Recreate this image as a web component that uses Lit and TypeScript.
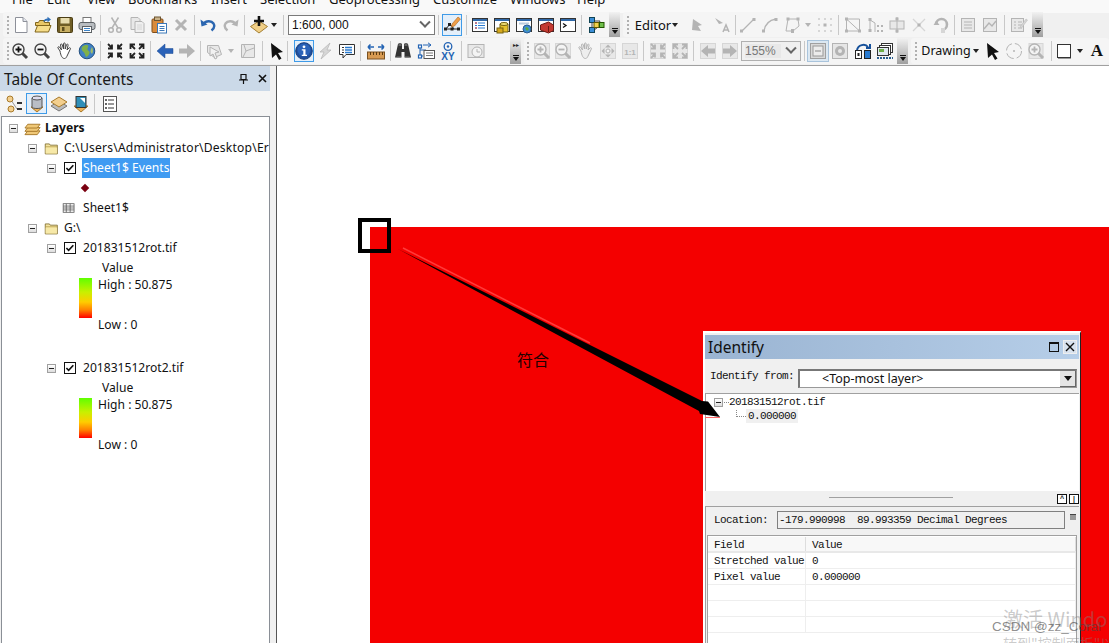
import { LitElement, html, css, svg } from "lit";
import { customElement } from "lit/decorators.js";

const I = (b: unknown, s = 18) => html`<svg width=${s} height=${s} viewBox="0 0 18 18">${b}</svg>`;
const G1 = "#b4b4b4", G2 = "#d6d6d6", G3 = "#e8e8e8";
const win = (inner: unknown, stroke = "#333", bar = "#2f68a8", fill = "#fff") => svg`<rect x="1.500" y="2.500" width="15" height="13" fill=${fill} stroke=${stroke}/><rect x="2" y="3" width="14" height="2" fill=${bar}/>${inner}`;
const mag = (c: string, d: string, o = "#444") => svg`<path d="M11 11l5 5" stroke=${o} stroke-width="3"/><circle cx="7.500" cy="7.500" r="5.500" fill="#f4f4f4" stroke=${o} stroke-width="1.400"/><path d=${d} stroke=${c} stroke-width="1.800"/>`;
const arrows4 = (inward: boolean, c = "#222") => {
  const a = inward
    ? "M2 2l4 4M6 2.500v4H2M16 2l-4 4M12 2.500v4h4M2 16l4-4M6 15.500v-4H2M16 16l-4-4M12 15.500v-4h4"
    : "M7 7L3 3M2.500 7V2.500H7M11 7l4-4M15.500 7V2.500H11M7 11l-4 4M2.500 11v4.500H7M11 11l4 4M15.500 11v4.500H11";
  return svg`<path d=${a} fill="none" stroke=${c} stroke-width="1.800"/>`;
};
const gdoc = (inner: unknown) => svg`<rect x="2.500" y="2.500" width="13" height="13" fill=${G3} stroke=${G1}/>${inner}`;
const scissors = (c: string) => svg`<g fill="none" stroke=${c} stroke-width="1.500"><circle cx="5" cy="14" r="2.300"/><circle cx="13" cy="14" r="2.300"/><path d="M6 12L12.500 1.500M12 12L5.500 1.500"/></g>`;

const ICON: Record<string, any> = {
  newDoc: I(svg`<path d="M3.500 1.500h7.500l4 4v11H3.500z" fill="#fff" stroke="#8d9099"/><path d="M11 1.500v4h4" fill="#e4e8ef" stroke="#8d9099"/>`),
  open: I(svg`<path d="M1.500 6.500h3l1-2h5v2h5v3h-14z" fill="#e9c766" stroke="#80651c"/><path d="M3.500 9.500h13.500l-2.500 6.500H1z" fill="#f6dd8a" stroke="#80651c"/><path d="M9 6C10 3.500 11.500 2.500 13.500 2.500V.8l3.500 2.700-3.500 2.700V4.500C12 4.500 10.500 5 9 6z" fill="#2f6fb7"/>`),
  save: I(svg`<rect x="1.500" y="1.500" width="15" height="15" rx="1" fill="#6f5d25" stroke="#4a3d14"/><rect x="4.500" y="2" width="9" height="5.500" fill="#e7dcae"/><rect x="4" y="10" width="10" height="6" fill="#c7ae62"/><rect x="6" y="11" width="2.500" height="4" fill="#5c4c1c"/>`),
  print: I(svg`<rect x="5" y="1.500" width="8" height="6" fill="#fff" stroke="#777"/><rect x="1" y="6.500" width="16" height="7" rx="2" fill="#b9bdc1" stroke="#5d6266"/><rect x="4.500" y="10.500" width="9" height="6" fill="#fff" stroke="#5d6266"/><path d="M6 12.500h6M6 14.500h6" stroke="#3b83c8"/>`),
  cut: I(scissors(G1)),
  copy: I(svg`<path d="M3 1.500h7l2 2v10H3z" fill=${G3} stroke=${G1}/><path d="M7 5.500h7l2 2v9H7z" fill="#efefef" stroke=${G1}/><path d="M9 9h5M9 11h5M9 13h5" stroke=${G2}/>`),
  paste: I(svg`<rect x="2" y="3" width="11" height="13.500" rx="1" fill="#d98b3c" stroke="#7f4e1c"/><rect x="4.500" y="1" width="6" height="3.500" fill="#c9b28a" stroke="#6d5530"/><rect x="7.500" y="7.500" width="9" height="9.500" fill="#fff" stroke="#3b78b8"/><path d="M9.500 10.500h5M9.500 12.500h5M9.500 14.500h5" stroke="#3b78b8"/>`),
  del: I(svg`<path d="M4 4l10 10M14 4L4 14" stroke=${G1} stroke-width="3"/>`),
  undo: I(svg`<path d="M4.500 8C7 4.500 12.500 4.500 14.500 7.500c1.500 2.500.5 5-2 7" fill="none" stroke="#2b66b0" stroke-width="2.400"/><path d="M1.500 3.500l1 7 6-2z" fill="#2b66b0"/>`),
  redo: I(svg`<g transform="matrix(-1 0 0 1 18 0)"><path d="M4.500 8C7 4.500 12.500 4.500 14.500 7.500c1.500 2.500.5 5-2 7" fill="none" stroke=${G1} stroke-width="2.400"/><path d="M1.500 3.500l1 7 6-2z" fill=${G1}/></g>`),
  add: I(svg`<path d="M9 5l8.500 5.500L9 17 .5 10.500z" fill="#f1cf86" stroke="#a37f34"/><path d="M9 0v10M4 5h10" stroke="#111" stroke-width="2.600"/>`),
  edit: I(svg`<path d="M3 13h12M3 13l4-5M7 8l4 5" stroke="#222" fill="none"/><g fill="#222"><rect x="1" y="11.500" width="3" height="3"/><rect x="7.500" y="11.500" width="3" height="3"/><rect x="14" y="11.500" width="3" height="3"/><rect x="5" y="7" width="3" height="3"/></g><path d="M9 8l6-7 2.500 2-6 7-3 1z" fill="#ee9f4a" stroke="#b0651d" stroke-width=".6"/>`),
  tableWin: I(win(svg`<path d="M4 7h2M7 7h7M4 9.500h2M7 9.500h7M4 12h2M7 12h7" stroke="#2a7bd0"/><path d="M4 7h2M4 12h2" stroke="#d33"/>`)),
  catalog: I(win(svg`<path d="M7 8h8v8H7z" fill="#e6c12b" stroke="#76620e"/><ellipse cx="11" cy="8" rx="4" ry="1.500" fill="#f4e27a" stroke="#76620e"/><rect x="4" y="12" width="6" height="5" fill="#d6a81e" stroke="#76620e"/>`)),
  search: I(win(svg`<rect x="4" y="6.500" width="10" height="2" fill="#bcd"/><circle cx="12" cy="13" r="4" fill="#3d8dd0" stroke="#2a5e90"/><path d="M10 12l2-1 2 2-2 2z" fill="#5eaa3c"/>`)),
  toolbox: I(win(svg`<path d="M3.500 9l8-3 5 3v5.500l-5 2.500-8-3z" fill="#c43a32" stroke="#6d1a14"/><path d="M11.500 10v6" stroke="#6d1a14"/>`)),
  python: I(win(svg`<path d="M4 7.500l3 2-3 2" fill="none" stroke="#111" stroke-width="1.300"/>`)),
  model: I(svg`<path d="M5 4v10M5 5h8M5 13h4l4-8" fill="none" stroke="#444"/><rect x="2.500" y="1.500" width="5" height="5" fill="#3b8ed8" stroke="#145"/><rect x="2.500" y="11.500" width="5" height="5" fill="#3b8ed8" stroke="#145"/><rect x="7" y="6.500" width="5" height="5" fill="#f0d24a" stroke="#650"/><rect x="12.500" y="6.500" width="4.500" height="5" fill="#6fbf4a" stroke="#250"/>`),
  tri: I(svg`<path d="M5 3l9 6-4 1 3 5-9-1z" fill=${G1}/>`),
  triA: I(svg`<path d="M2 2l8 5-4 1z" fill=${G1}/><path d="M10 16l3-7 3 7M11 14h4" fill="none" stroke=${G1} stroke-width="1.500"/>`),
  line: I(svg`<path d="M3 15L15 3" stroke=${G1} stroke-width="1.300"/><rect x="1" y="13.500" width="3" height="3" fill=${G1}/><rect x="13.500" y="2" width="3" height="3" fill=${G1}/>`),
  curve: I(svg`<path d="M3 15C4 8 9 4 15 3" stroke=${G1} fill="none" stroke-width="1.300"/><rect x="1" y="13.500" width="3" height="3" fill=${G1}/><rect x="13.500" y="2" width="3" height="3" fill=${G1}/>`),
  poly: I(svg`<path d="M5 3h10l1 7-6 5H3z" fill="none" stroke=${G1}/><g fill=${G1}><rect x="3.500" y="1.500" width="3" height="3"/><rect x="13.500" y="1.500" width="3" height="3"/><rect x="8" y="13" width="3" height="4"/></g>`),
  star: I(svg`<g fill=${G2}><rect x="7.500" y="7.500" width="3" height="3" fill=${G1}/><rect x="2" y="2" width="2" height="2"/><rect x="14" y="2" width="2" height="2"/><rect x="2" y="14" width="2" height="2"/><rect x="14" y="14" width="2" height="2"/><rect x="8" y="2" width="2" height="2"/><rect x="8" y="14" width="2" height="2"/><rect x="2" y="8" width="2" height="2"/><rect x="14" y="8" width="2" height="2"/></g>`),
  topo1: I(svg`<path d="M2.500 3h13v12h-13zM2.500 3l13 12" fill="none" stroke=${G1}/><g fill=${G1}><rect x="1" y="1.500" width="3" height="3"/><rect x="14" y="13.500" width="3" height="3"/><rect x="1" y="13.500" width="3" height="3"/></g>`),
  topo2: I(svg`<path d="M4 2v14M4 4l5 3v9" fill="none" stroke=${G1}/><g fill=${G1}><rect x="2.500" y="2" width="3" height="3"/><rect x="2.500" y="13" width="3" height="3"/><rect x="11" y="9" width="2" height="2"/><rect x="15" y="9" width="2" height="2"/><rect x="11" y="14" width="2" height="2"/><rect x="15" y="14" width="2" height="2"/></g>`),
  split: I(svg`<rect x="2" y="5" width="14" height="8" fill=${G3} stroke=${G1}/><path d="M9 1v16" stroke=${G1}/><rect x="7.500" y="1.500" width="3" height="3" fill=${G1}/><rect x="7.500" y="13.500" width="3" height="3" fill=${G1}/>`),
  cross: I(svg`<path d="M3 15L15 3M3 3l12 12" stroke=${G2} stroke-width="1.300"/><rect x="7.500" y="7.500" width="3" height="3" fill=${G1}/>`),
  rot: I(svg`<path d="M4 8a5.500 5.500 0 1 1 6 6" fill="none" stroke=${G1} stroke-width="2.600"/><path d="M1.500 9h6L4.500 5z" fill=${G1}/><rect x="9" y="12" width="4" height="5" fill=${G2}/>`),
  attr: I(gdoc(svg`<path d="M5 6h8M5 9h8M5 12h8" stroke=${G1}/>`)),
  sketch: I(gdoc(svg`<path d="M3 13l5-6 3 3 4-5" fill="none" stroke=${G1} stroke-width="1.400"/>`)),
  props: I(svg`<rect x="1.500" y="2.500" width="12" height="13" fill=${G3} stroke=${G1}/><path d="M4 6h2M8 6h4M4 9h2M8 9h4M4 12h2M8 12h4" stroke=${G1}/><path d="M10 11l6-8 1.500 1-6 8z" fill=${G2} stroke=${G1} stroke-width=".5"/>`),
  zoomIn: I(mag("#111", "M4.500 7.500h6M7.500 4.500v6")),
  zoomOut: I(mag("#111", "M4.500 7.500h6")),
  pan: I(svg`<path d="M4 9L2 6c-.6-1 .8-1.800 1.500-1L5.500 8 4.500 3c-.2-1.200 1.500-1.400 1.700-.3L7.500 7 7.500 1.800c0-1.200 1.700-1.200 1.700 0V7L10.500 2.800c.3-1.100 1.900-.7 1.600.4L11 8 13 6c.8-.8 2 .2 1.300 1.100L11.500 13c-.8 1.800-1.500 3.500-3 3.500-2.500 0-3.700-3-4.500-7.500z" fill="#fff" stroke="#444"/>`),
  globe: I(svg`<circle cx="9" cy="9" r="7.800" fill="#3f80c4" stroke="#24507f"/><path d="M4 5c2-2 5-2.500 6-1.500 1 1.500-1 2.500-.5 4S12 9 11.500 11 9.500 14.500 8 15c-1-2-1-4-2.500-5C4 9 3 7 4 5z" fill="#7fb04a"/><path d="M14 5c1 2 1.500 5 0 7l-1.500-2c0-2 .5-3.500 1.500-5z" fill="#a2bd6a"/>`),
  fixedIn: I(arrows4(true)),
  fixedOut: I(arrows4(false)),
  back: I(svg`<path d="M1 9l8-7v4.500h8v5H9V16z" fill="#2a62b8" stroke="#1d4a90" stroke-width=".5"/>`),
  fwd: I(svg`<path d="M17 9L9 2v4.500H1v5h8V16z" fill=${G1}/>`),
  sel: I(svg`<path d="M1.500 3.500h11l3 9-7 3-7-5z" fill=${G3} stroke=${G1}/><path d="M4 5l9 5-4 1 2 5-2 1-2-5-3 2z" fill="#f2f2f2" stroke=${G1}/>`),
  clear: I(svg`<path d="M2.500 2.500h13v13h-13z" fill=${G3} stroke=${G1}/><path d="M5 3l2 6-3 6M7 9l8-3" stroke=${G1} fill="none"/>`),
  ptr: I(svg`<path d="M3 1l12 9-5 1 3.500 5.500-2.500 1.500L8 12.500l-4 3.500z" fill="#111"/>`),
  info: I(svg`<circle cx="9" cy="9" r="8.300" fill="#1f4f9e" stroke="#123a7a"/><circle cx="9" cy="8" r="6.500" fill="#2a62b8"/><circle cx="9" cy="4.800" r="1.400" fill="#fff"/><path d="M6.800 7.200H10.500V12.800H12V14H6.800V12.800H8.300V8.400H6.800z" fill="#fff"/>`),
  bolt: I(svg`<path d="M13 1L3 10h4l-3 7 10-9h-4z" fill=${G2} stroke=${G1} stroke-width=".7"/>`),
  popup: I(svg`<path d="M1.500 2.500h15v10H8l-3 3.500V12.500H1.500z" fill="#fff" stroke="#333"/><path d="M4 5.500h2M4 8h2M4 10.500h2" stroke="#333"/><path d="M7 5.500h7M7 8h7M7 10.500h7" stroke="#2a7bd0" stroke-width="1.300"/>`),
  measure: I(svg`<path d="M1 5h6M1 5l2.500-2.500M1 5l2.500 2.500M17 5h-6M17 5l-2.500-2.500M17 5l-2.500 2.500" stroke="#2464b4" fill="none" stroke-width="1.600"/><rect x=".5" y="10" width="17" height="7" fill="#d79a52" stroke="#7a5120"/><path d="M3.500 10v3M6.500 10v3M9.500 10v3M12.500 10v3M15.500 10v3" stroke="#5a3a10"/>`),
  bino: I(svg`<path d="M4 2h4v5h2V2h4l3 13.500h-6.500V10h-3v5.500H1z" fill="#333"/><path d="M2.500 15h4.500M11 15h4.500" stroke="#777"/><rect x="4.500" y="1" width="3" height="3" fill="#666"/><rect x="10.500" y="1" width="3" height="3" fill="#666"/>`),
  route: I(svg`<path d="M3 5v10M3 8h6M3 14h3" stroke="#2464b4" fill="none"/><rect x="7" y="8.500" width="10.500" height="8" fill="#fff" stroke="#555"/><path d="M9 11h7M9 13.500h7" stroke="#777"/><g fill="#fff" stroke="#2464b4" stroke-width="1.200"><rect x="1.500" y="3" width="3" height="3"/><rect x="1.500" y="13" width="3" height="3"/></g><path d="M6 3h8M11 .8L14 3l-3 2.200" stroke="#2464b4" fill="none"/>`),
  xy: I(svg`<circle cx="9" cy="4.500" r="3.800" fill="none" stroke="#2464b4" stroke-width="1.300"/><circle cx="9" cy="4.500" r="1.200" fill="#2464b4"/><text x="9" y="17.500" text-anchor="middle" font-family="Liberation Sans" font-weight="700" font-size="10" fill="#2464b4">XY</text>`),
  time: I(svg`<rect x="1" y="2.500" width="16" height="13" fill=${G3} stroke=${G1}/><circle cx="10" cy="10" r="5" fill="#f4f4f4" stroke=${G1}/><path d="M10 7v3h3" stroke=${G1} fill="none"/>`),
  lIn: I(svg`<rect x="1.500" y="1.500" width="15" height="15" fill=${G3} stroke=${G2}/>${mag(G1, "M4.500 7.500h6M7.500 4.500v6", G1)}`),
  lOut: I(svg`<rect x="1.500" y="1.500" width="15" height="15" fill=${G3} stroke=${G2}/>${mag(G1, "M4.500 7.500h6", G1)}`),
  lPan: I(svg`<path d="M4 9L2 6c-.6-1 .8-1.800 1.500-1L5.500 8 4.500 3c-.2-1.200 1.500-1.400 1.700-.3L7.500 7 7.500 1.800c0-1.200 1.700-1.200 1.700 0V7L10.500 2.800c.3-1.100 1.900-.7 1.600.4L11 8 13 6c.8-.8 2 .2 1.300 1.100L11.500 13c-.8 1.800-1.500 3.500-3 3.500-2.500 0-3.700-3-4.500-7.500z" fill="#eee" stroke=${G1}/>`),
  lFull: I(svg`<rect x="1.500" y="1.500" width="15" height="15" fill=${G3} stroke=${G2}/><path d="M9 2.500l3 3H6zM9 15.500l-3-3h6zM2.500 9l3-3v6zM15.500 9l-3 3V6z" fill=${G1}/><circle cx="9" cy="9" r="2" fill="#f4f4f4" stroke=${G1}/>`),
  l11: I(svg`<rect x="1.500" y="1.500" width="15" height="15" fill=${G3} stroke=${G2}/><text x="9" y="13" text-anchor="middle" font-family="Liberation Sans" font-weight="700" font-size="8" fill=${G1}>1:1</text>`),
  lFi: I(svg`<rect x="1.500" y="1.500" width="15" height="15" fill=${G3} stroke=${G2}/>${arrows4(true, G1)}`),
  lFo: I(svg`<rect x="1.500" y="1.500" width="15" height="15" fill=${G3} stroke=${G2}/>${arrows4(false, G1)}`),
  lBack: I(svg`<rect x="1.500" y="1.500" width="15" height="15" fill=${G3} stroke=${G2}/><path d="M2 9l7-6v3.500h7v5H9V15z" fill=${G1}/>`),
  lFwd: I(svg`<rect x="1.500" y="1.500" width="15" height="15" fill=${G3} stroke=${G2}/><path d="M16 9L9 3v3.500H2v5h7V15z" fill=${G1}/>`),
  page: I(svg`<rect x="1.500" y="1.500" width="15" height="15" fill="#d9d9d9" stroke="#a0a0a0"/><rect x="4" y="4" width="10" height="10" fill="#ececec" stroke="#999"/><path d="M6 9h6" stroke="#888"/>`),
  page2: I(svg`<rect x="1.500" y="1.500" width="15" height="15" fill="#e6e6e6" stroke=${G1}/><circle cx="9" cy="9" r="5" fill=${G1}/><circle cx="9" cy="9" r="2" fill=${G3}/>`),
  swap: I(svg`<rect x="1.500" y="8.500" width="6" height="8" fill="#fff" stroke="#222"/><rect x="10.500" y="8.500" width="6" height="8" fill="#2a7bd0" stroke="#222"/><path d="M3 8C4 3 11 1 14 5M12 6h4V2" fill="none" stroke="#15509a" stroke-width="2"/><path d="M3.500 11h2v3h-2z" fill="#222"/>`),
  frames: I(svg`<rect x="5.500" y="1.500" width="11" height="9" fill="#fff" stroke="#333"/><rect x="3.500" y="3.500" width="11" height="9" fill="#fff" stroke="#333"/><rect x="1.500" y="5.500" width="11" height="8" fill="#dfe8f0" stroke="#333"/><rect x="3" y="7" width="5" height="3" fill="#6fae48"/><path d="M1 16h16" stroke="#2a5e90" stroke-width="2" stroke-dasharray="2 1"/>`),
  rotate: I(svg`<circle cx="9" cy="9" r="7.500" fill="none" stroke=${G1} stroke-dasharray="9 3"/><circle cx="9" cy="9" r="1" fill=${G1}/>`),
  zoomEl: I(svg`<rect x="2" y="1.500" width="14" height="15" fill=${G3} stroke=${G2}/>${mag(G1, "M4.500 7.500h6M7.500 4.500v6", G1)}`),
  rect: I(svg`<rect x="2.500" y="2.500" width="13" height="13" fill="#fff" stroke="#333"/><path d="M3 16.500h13" stroke="#999"/>`),
};

type Item = [number, any, number?];
const sep = "sep";
const darrow = (c = "#222") => html`<span class="da" style="border-top-color:${c}"></span>`;
const grip = html`<span class="grip"></span>`;
const tab = (dots = false) => html`<span class="tab">${dots ? html`<span class="dots">▸▸</span>` : ""}<span class="chev"></span></span>`;

const R1A: Item[] = [[7, grip, 3], [21, "newDoc"], [43, "open"], [65, "save"], [87, "print"], [100, sep], [115, "cut"], [137, "copy"], [159, "paste"], [181, "del"], [194, sep], [208, "undo"], [231, "redo"], [244, sep], [259, "add"], [274, darrow(), 8], [283, sep],
  [361, html`<span class="combo scale"><span>1:600, 000</span><span class="cv"></span></span>`, 147], [438, sep],
  [452, html`<span class="hl">${ICON.edit}</span>`, 20], [466, sep], [480, "tableWin"], [502, "catalog"], [524, "search"], [546, "toolbox"], [568, "python"], [581, sep], [596, "model"]];
const R1B: Item[] = [[627, grip, 3], [653, html`<span class="tbtxt">Editor</span>`, 38], [675, darrow(), 8], [697, "tri"], [722, "triA"], [735, sep], [748, "line"], [770, "curve"], [792, "poly"], [808, darrow(G1), 8], [825, "star"], [838, sep], [853, "topo1"], [875, "topo2"], [897, "split"], [919, "cross"], [941, "rot"], [954, sep], [968, "attr"], [990, "sketch"], [1004, sep], [1019, "props"]];
const R2A: Item[] = [[7, grip, 3], [20, "zoomIn"], [42, "zoomOut"], [65, "pan"], [87, "globe"], [100, sep], [115, "fixedIn"], [137, "fixedOut"], [150, sep], [165, "back"], [187, "fwd"], [200, sep], [215, "sel"], [230, darrow(G1), 7], [248, "clear"], [262, sep], [277, "ptr"], [287, sep],
  [304, html`<span class="hl">${ICON.info}</span>`, 20], [326, "bolt"], [347, "popup"], [360, sep], [376, "measure"], [390, sep], [403, "bino"], [426, "route"], [448, "xy"], [461, sep], [476, "time"]];
const R2B: Item[] = [[527, grip, 3], [542, "lIn"], [563, "lOut"], [586, "lPan"], [608, "lFull"], [630, "l11"], [643, sep], [658, "lFi"], [680, "lFo"], [693, sep], [708, "lBack"], [730, "lFwd"],
  [771, html`<span class="combo dim"><span class="pct">155%</span><span class="cv"></span></span>`, 60], [804, sep], [818, html`<span class="hl pale">${ICON.page}</span>`, 22], [840, "page2"], [863, "swap"], [885, "frames"]];
const R2C: Item[] = [[915, grip, 3], [946, html`<span class="tbtxt small">Drawing</span>`, 48], [976, darrow(), 8], [993, "ptr"], [1014, "rotate"], [1036, "zoomEl"], [1051, sep], [1064, "rect"], [1080, darrow(), 8], [1097, html`<span class="bigA">A</span>`, 16]];

const MENU: [string, number][] = [["File", 12], ["Edit", 47], ["View", 87], ["Bookmarks", 128], ["Insert", 211], ["Selection", 260], ["Geoprocessing", 329], ["Customize", 433], ["Windows", 510], ["Help", 577]];

const folder = I(svg`<path d="M1.500 3.500h5l1 1.500h8.500v10.500h-14.500z" fill="#f3e3a0" stroke="#7d6a2c"/><path d="M1.500 7h14.500" stroke="#b49a45"/><path d="M2 8h13.500v7H2z" fill="#f7e9a8"/>`, 15);
const layersIcon = I(svg`<g stroke="#a87a2a" fill="#f0c877"><path d="M4 11.500h13l-3 4H1z"/><path d="M4 8h13l-3 4H1z"/><path d="M4 4.500h13l-3 4H1z"/></g>`, 17);
const tick = I(svg`<path d="M2.500 9l4 4L15 4" fill="none" stroke="#111" stroke-width="3"/>`, 10);

@customElement("app-root")
export class AppRoot extends LitElement {
  static styles = css`
    :host { display: block; width: 1109px; height: 643px; overflow: hidden; position: relative; background: #f0f0f0; font-family: "Noto Sans", "Open Sans", sans-serif; color: #111; }
    .menu { display: flex; height: 12px; overflow: hidden; background: #f9f9f9; font-size: 13px; line-height: 16px; }
    .menu span { margin-top: -9px; flex: none; white-space: nowrap; width: 0; }
    .row { display: flex; height: 26px; background: #f0f0f0; }
    .row.one { background: linear-gradient(#f9f9f9 0, #f9f9f9 1px, #f0f0f0 1px); }
    .row.two { height: 27px; }
    .row.two .band { height: 26px; padding-bottom: 1px; box-sizing: border-box; }
    .gap { width: 3px; flex: none; }
    .band { display: flex; align-items: center; height: 25px; background: #f5f5f5; border-radius: 3px; position: relative; flex: none; }
    .cell { flex: none; display: flex; align-items: center; justify-content: center; height: 22px; }
    .sep { width: 1px; height: 20px; background: #c8c8c8; }
    .grip { width: 2px; height: 18px; background-image: repeating-linear-gradient(#b0b0b0 0 2px, transparent 2px 4px); }
    .da { width: 0; height: 0; border: 3.500px solid transparent; border-bottom: 0; border-top: 4px solid #222; }
    .tab { position: absolute; right: 0; top: 0; bottom: 0; width: 11px; background: linear-gradient(#f2f2f2, #9f9f9f); display: flex; flex-direction: column; align-items: center; justify-content: flex-end; padding-bottom: 3px; box-sizing: border-box; }
    .chev { width: 6px; height: 5px; border-top: 1px solid #111; position: relative; }
    .chev::after { content: ""; position: absolute; left: 0; top: 1px; border: 3px solid transparent; border-top: 4px solid #111; border-bottom: 0; }
    .dots { font-size: 6px; line-height: 8px; position: absolute; top: 3px; color: #222; }
    .combo { box-sizing: border-box; width: 100%; height: 20px; background: #fff; border: 1px solid #7a7a7a; display: flex; align-items: center; justify-content: space-between; padding: 0 5px 0 3px; font-size: 12px; font-family: "Liberation Sans", sans-serif; white-space: nowrap; }
    .combo.dim { background: #f0f0f0; border-color: #b0b0b0; color: #777; }
    .pct { background: #e8e8e8; width: 36px; }
    .cv { width: 6px; height: 6px; border-right: 2px solid #666; border-bottom: 2px solid #666; transform: rotate(45deg) translate(-2px, -2px); flex: none; }
    .hl { box-sizing: border-box; width: 100%; height: 22px; display: flex; align-items: center; justify-content: center; border: 1px solid #3f9be8; background: #e4effa; }
    .hl.pale { border-color: #a9c4dc; background: #dce8f2; }
    .tbtxt { font-size: 13px; white-space: nowrap; }
    .tbtxt.small { font-size: 12.500px; }
    .bigA { font: 700 17px "Liberation Serif", serif; }
    .main { display: flex; height: 578px; border-top: 1px solid #a0a0a0; }
    .toc { width: 270px; flex: none; display: flex; flex-direction: column; }
    .gutter { width: 6px; flex: none; }
    .tocHead { height: 25px; flex: none; background: #cbd9e8; display: flex; align-items: center; padding: 0 3px 0 4px; font-size: 15.500px; color: #1a1a1a; }
    .tocHead .title { flex: 1; }
    .pin { width: 9px; height: 10px; margin-right: 10px; }
    .x { width: 9px; height: 9px; }
    .tocTools { height: 25px; flex: none; display: flex; align-items: center; gap: 1px; padding-left: 4px; background: #f5f5f5; }
    .tocTools .tb { width: 21px; height: 21px; display: flex; align-items: center; justify-content: center; box-sizing: border-box; }
    .tocTools .on { border: 1px solid #3f9be8; background: #e4effa; }
    .tocTools .vsep { width: 1px; height: 20px; background: #c8c8c8; margin: 0 3px 0 2px; }
    .tree { flex: 1; background: #fff; border: 1px solid #8a8f96; border-bottom: 0; margin-left: 1px; padding-top: 1px; font-size: 12.100px; line-height: 20px; box-sizing: border-box; }
    .tr { display: flex; align-items: center; height: 20px; white-space: nowrap; overflow: hidden; }
    .l0 { padding-left: 7px; } .l1 { padding-left: 26px; } .l2 { padding-left: 45px; }
    .exp { box-sizing: border-box; width: 9px; height: 9px; border: 1px solid #a0a0a0; background: linear-gradient(#fff, #ddd); position: relative; flex: none; }
    .exp::after { content: ""; position: absolute; left: 1px; right: 1px; top: 3px; height: 1px; background: #222; }
    .chk { box-sizing: border-box; width: 12px; height: 12px; border: 1px solid #111; margin: 0 7px 0 8px; display: flex; flex: none; background: #fff; }
    .folder { margin: 0 5px 0 7px; display: flex; flex: none; }
    .folder.top { margin: 0 4px 0 6px; }
    .lname { font-weight: 700; }
    .wide { letter-spacing: .2px; }
    .selt { background: #3f9bf2; color: #fff; padding: 0 1px; margin-left: -1px; line-height: 20px; }
    .symbol { padding-left: 80px; }
    .dia { width: 6px; height: 6px; background: #7a0010; transform: rotate(45deg); }
    .tbl { padding-left: 60px; gap: 7px; }
    .val { padding-left: 100px; }
    .legend { display: flex; height: 80px; padding-left: 77px; gap: 6px; }
    .ramp { width: 13px; height: 40px; background: linear-gradient(#5fff00, #c8f000 35%, #ffcc00 60%, #ff8000 80%, #f00); flex: none; }
    .labels { display: flex; flex-direction: column; line-height: 20px; margin-top: -3px; gap: 20px; }
    .map { flex: 1; position: relative; background: #fff; border-left: 1px solid #555; padding: 161px 0 0 93px; box-sizing: border-box; min-width: 0; }
    .red { background: #f40000; height: 100%; }
    .note { position: absolute; left: 240px; top: 283px; font: 16px "Noto Sans CJK SC", sans-serif; line-height: 20px; color: #200; }
    .overlay { position: absolute; left: 0; top: 0; pointer-events: none; }
    .dlg { position: absolute; left: 426px; top: 265px; width: 378px; height: 320px; box-sizing: border-box; background: #f0f0f0; border: 2px solid #fff; border-right: 1px solid #222; border-bottom: 0; padding-top: 2px; display: flex; flex-direction: column; font-family: "Liberation Mono", monospace; font-size: 11px; letter-spacing: -.6px; }
    .dt { height: 24px; background: linear-gradient(90deg, #9ab4d2, #b6cee8); display: flex; align-items: center; padding: 0 2px 0 3px; font: 15.500px "Noto Sans", sans-serif; letter-spacing: 0; margin-right: 1px; flex: none; }
    .dt .t { flex: 1; }
    .mx { box-sizing: border-box; width: 10px; height: 10px; border: 1px solid #111; border-top-width: 2px; margin-right: 4px; }
    .cl { box-sizing: border-box; width: 14px; height: 14px; border: 1px solid #eee; background: #d8e2ee; display: flex; align-items: center; justify-content: center; }
    .from { height: 34px; display: flex; align-items: center; padding: 4px 0 0 5px; flex: none; box-sizing: border-box; }
    .from .lab { width: 88px; flex: none; margin-top: -4px; }
    .fc { box-sizing: border-box; width: 279px; height: 19px; border: 1px solid #999; border-left: 2px solid #777; border-top: 2px solid #777; background: #fff; display: flex; align-items: center; justify-content: space-between; font: 12.500px "Noto Sans", sans-serif; letter-spacing: 0; padding-left: 22px; }
    .fb { width: 16px; height: 16px; background: #e4e4e4; border-right: 1px solid #666; border-bottom: 1px solid #666; display: flex; align-items: center; justify-content: center; box-sizing: border-box; }
    .fb i { border: 4px solid transparent; border-top: 5px solid #111; border-bottom: 0; }
    .dtree { height: 98px; flex: none; background: #fff; border-left: 1px solid #a0a0a0; border-top: 1px solid #a0a0a0; margin-right: 1px; padding: 1px 0 0 8px; position: relative; box-sizing: border-box; line-height: 14px; }
    .dr { display: flex; align-items: center; height: 14px; }
    .dr .exp { margin-right: 1px; }
    .dots1 { width: 5px; border-top: 1px dotted #888; margin-right: 0; }
    .ell { width: 10px; height: 7px; border-left: 1px dotted #888; border-bottom: 1px dotted #888; margin: -6px 0 0 22px; flex: none; box-sizing: border-box; }
    .seltree { background: #f0f0f0; padding: 0 2px; width: 52px; box-sizing: border-box; }
    .split { height: 15px; flex: none; display: flex; align-items: center; position: relative; justify-content: flex-end; padding-right: 1px; gap: 2px; }
    .split .ln { position: absolute; left: 124px; top: 6px; width: 124px; height: 1px; background: #a0a0a0; }
    .sb { box-sizing: border-box; width: 10px; height: 10px; border: 1px solid #111; background: #fff; font: 700 7px/8px "Liberation Sans", sans-serif; letter-spacing: 0; text-align: center; }
    .locwrap { flex: 1; border: 1px solid #a0a0a0; border-right: 0; margin-right: 1px; border-bottom: 0; min-height: 0; }
    .loc { height: 25px; display: flex; align-items: center; padding-left: 8px; position: relative; }
    .loc .lab { width: 63px; flex: none; }
    .li { box-sizing: border-box; width: 288px; height: 18px; border: 1px solid #808080; background: #f0f0f0; padding-left: 1px; line-height: 16px; white-space: pre; flex: none; }
    .lb { width: 6px; height: 5px; background: #999; border-top: 1px solid #444; margin: -6px 0 0 5px; }
    .grid { margin: 3px 2px 0 1px; border: 1px solid #a0a0a0; border-bottom: 0; background: #fff; height: 110px; }
    .gr { display: grid; grid-template-columns: 98px 1fr; height: 16px; border-bottom: 1px solid #eee; box-sizing: border-box; line-height: 17px; }
    .gr span { padding-left: 6px; border-right: 1px solid #eee; white-space: nowrap; overflow: hidden; }
    .gr.head { background: #f8f8f8; margin-top: 1px; border-bottom: 2px solid #e8e8e8; }
    .gr.head span { border-right-color: #ddd; }
    .wm { position: absolute; left: 1003px; top: 606px; font: 20px "Noto Sans CJK SC", "Liberation Sans", sans-serif; line-height: 26px; color: rgba(130,130,130,.42); white-space: nowrap; pointer-events: none; }
    .wm2 { position: absolute; left: 1003px; top: 634px; font: 14px "Noto Sans CJK SC", sans-serif; line-height: 18px; color: rgba(130,130,130,.42); white-space: nowrap; }
    .csdn { position: absolute; left: 992px; top: 619px; font: 13.500px "Liberation Sans", sans-serif; line-height: 16px; color: rgba(70,70,70,.62); white-space: nowrap; }
  `;

  private band(start: number, end: number, items: Item[], tabbed: "" | "plain" | "dots" = "") {
    let pos = start;
    return html`<div class="band" style="width:${end - start}px">
      ${items.map(([c, what, w]) => {
        const width = what === sep ? 1 : w ?? 18;
        const left = Math.round(c - width / 2);
        const m = left - pos;
        pos = left + width;
        const inner = what === sep ? html`<span class="sep"></span>` : typeof what === "string" ? ICON[what] : what;
        return html`<span class="cell" style="width:${width}px;margin-left:${m}px">${inner}</span>`;
      })}
      ${tabbed ? tab(tabbed === "dots") : ""}
    </div>`;
  }

  render() {
    let mx = 0;
    return html`
      <div class="menu">${MENU.map(([t, x]) => { const m = x - mx; mx = x; return html`<span style="margin-left:${m}px">${t}</span>`; })}</div>
      <div class="row one">
        <span class="gap"></span>${this.band(3, 620, R1A, "plain")}
        <span class="gap"></span>${this.band(623, 1043, R1B, "plain")}
      </div>
      <div class="row two">
        <span class="gap"></span>${this.band(3, 521, R2A, "dots")}
        <span class="gap"></span>${this.band(524, 908, R2B, "plain")}
        <span class="gap"></span>${this.band(911, 1109, R2C)}
      </div>
      <div class="main">
        <div class="toc">
          <div class="tocHead"><span class="title">Table Of Contents</span>
            <svg class="pin" viewBox="0 0 9 10"><path d="M2 .5h5v5H2zM0 6h9M4.500 6v4" fill="none" stroke="#111" stroke-width="1.200"/></svg>
            <svg class="x" viewBox="0 0 9 9"><path d="M1 1l7 7M8 1L1 8" stroke="#111" stroke-width="1.600"/></svg>
          </div>
          <div class="tocTools">
            <span class="tb">${I(svg`<path d="M5 5l6 9" stroke="#999"/><circle cx="4" cy="4" r="3" fill="#f3cf8e" stroke="#a87a2a"/><circle cx="5" cy="14" r="3" fill="#f3cf8e" stroke="#a87a2a"/><rect x="11" y="7" width="5" height="2" fill="#333"/><rect x="11" y="13" width="5" height="2" fill="#333"/>`)}</span>
            <span class="tb on">${I(svg`<path d="M3 12h12l-6 5z" fill="#eeb35c" stroke="#a87a2a"/><path d="M4 3v9c0 2 10 2 10 0V3z" fill="#b9bec6" stroke="#555"/><ellipse cx="9" cy="3" rx="5" ry="2" fill="#dde" stroke="#555"/>`)}</span>
            <span class="tb">${I(svg`<path d="M9 6l8 5-8 5-8-5z" fill="#bbb" stroke="#777"/><path d="M9 2l8 5-8 5-8-5z" fill="#f3cf8e" stroke="#a87a2a"/>`)}</span>
            <span class="tb">${I(svg`<path d="M2 11h14l-7 6z" fill="#eeb35c" stroke="#a87a2a"/><rect x="4" y="1.500" width="10" height="11" fill="#2f8fb8" stroke="#333"/><path d="M8 3h5v5z" fill="#fff"/>`)}</span>
            <span class="vsep"></span>
            <span class="tb">${I(svg`<rect x="2.500" y="1.500" width="13" height="15" fill="#fff" stroke="#555"/><path d="M7 5h6M7 9h6M7 13h6" stroke="#333"/><circle cx="5" cy="5" r="1" fill="#333"/><circle cx="5" cy="9" r="1" fill="#333"/><circle cx="5" cy="13" r="1" fill="#333"/>`)}</span>
          </div>
          <div class="tree">
            <div class="tr l0"><span class="exp"></span><span class="folder top">${layersIcon}</span><span class="lname">Layers</span></div>
            <div class="tr l1"><span class="exp"></span><span class="folder">${folder}</span><span class="wide">C:\\Users\\Administrator\\Desktop\\Er</span></div>
            <div class="tr l2"><span class="exp"></span><span class="chk">${tick}</span><span class="selt">Sheet1$ Events</span></div>
            <div class="tr symbol"><span class="dia"></span></div>
            <div class="tr tbl">${I(svg`<rect x="1.500" y="3.500" width="14" height="11" fill="#fff" stroke="#555"/><path d="M1.500 6.500h14M1.500 9h14M1.500 11.500h14M5.500 3.500v11M10.500 3.500v11" stroke="#555"/>`, 14)}<span>Sheet1$</span></div>
            <div class="tr l1"><span class="exp"></span><span class="folder">${folder}</span><span>G:\\</span></div>
            <div class="tr l2"><span class="exp"></span><span class="chk">${tick}</span><span>201831512rot.tif</span></div>
            <div class="tr val">Value</div>
            <div class="legend"><span class="ramp"></span><span class="labels"><span>High : 50.875</span><span>Low : 0</span></span></div>
            <div class="tr l2"><span class="exp"></span><span class="chk">${tick}</span><span>201831512rot2.tif</span></div>
            <div class="tr val">Value</div>
            <div class="legend"><span class="ramp"></span><span class="labels"><span>High : 50.875</span><span>Low : 0</span></span></div>
          </div>
        </div>
        <div class="gutter"></div>
        <div class="map">
          <div class="red"></div>
          <div class="note">符合</div>
          <div class="dlg">
            <div class="dt"><span class="t">Identify</span><span class="mx"></span><span class="cl"><svg width="10" height="10" viewBox="0 0 10 10"><path d="M1 1l8 8M9 1L1 9" stroke="#111" stroke-width="1.400"/></svg></span></div>
            <div class="from"><span class="lab">Identify from:</span><div class="fc"><span>&lt;Top-most layer&gt;</span><span class="fb"><i></i></span></div></div>
            <div class="dtree">
              <div class="dr"><span class="exp"></span><span class="dots1"></span><span>201831512rot.tif</span></div>
              <div class="dr"><span class="ell"></span><span class="seltree">0.000000</span></div>
            </div>
            <div class="split"><span class="ln"></span><span class="sb">^</span><span class="sb">|</span></div>
            <div class="locwrap">
              <div class="loc"><span class="lab">Location:</span><span class="li">-179.990998  89.993359 Decimal Degrees</span><span class="lb"></span></div>
              <div class="grid">
                <div class="gr head"><span>Field</span><span>Value</span></div>
                <div class="gr"><span>Stretched value</span><span>0</span></div>
                <div class="gr"><span>Pixel value</span><span>0.000000</span></div>
                <div class="gr"><span></span><span></span></div>
                <div class="gr"><span></span><span></span></div>
                <div class="gr"><span></span><span></span></div>
              </div>
            </div>
          </div>
          <svg class="overlay" width="833" height="578" viewBox="277 66 833 578">
            <rect x="360" y="220" width="29" height="31" fill="none" stroke="#000" stroke-width="4"/>
            <path d="M398 249L702 401L708 401.500L720 417L700 414L699 411Z" fill="#000"/>
            <path d="M403 248L590 343" stroke="#ff3a3a" stroke-width="1.500"/>
            <path d="M705 417.500L720 417.500" stroke="#f66" stroke-width="1"/>
          </svg>
        </div>
      </div>
      <div class="wm">激活 Windo</div>
      <div class="wm2">转到"控制面板"以</div>
      <div class="csdn">CSDN @zz_Coral</div>
    `;
  }
}
